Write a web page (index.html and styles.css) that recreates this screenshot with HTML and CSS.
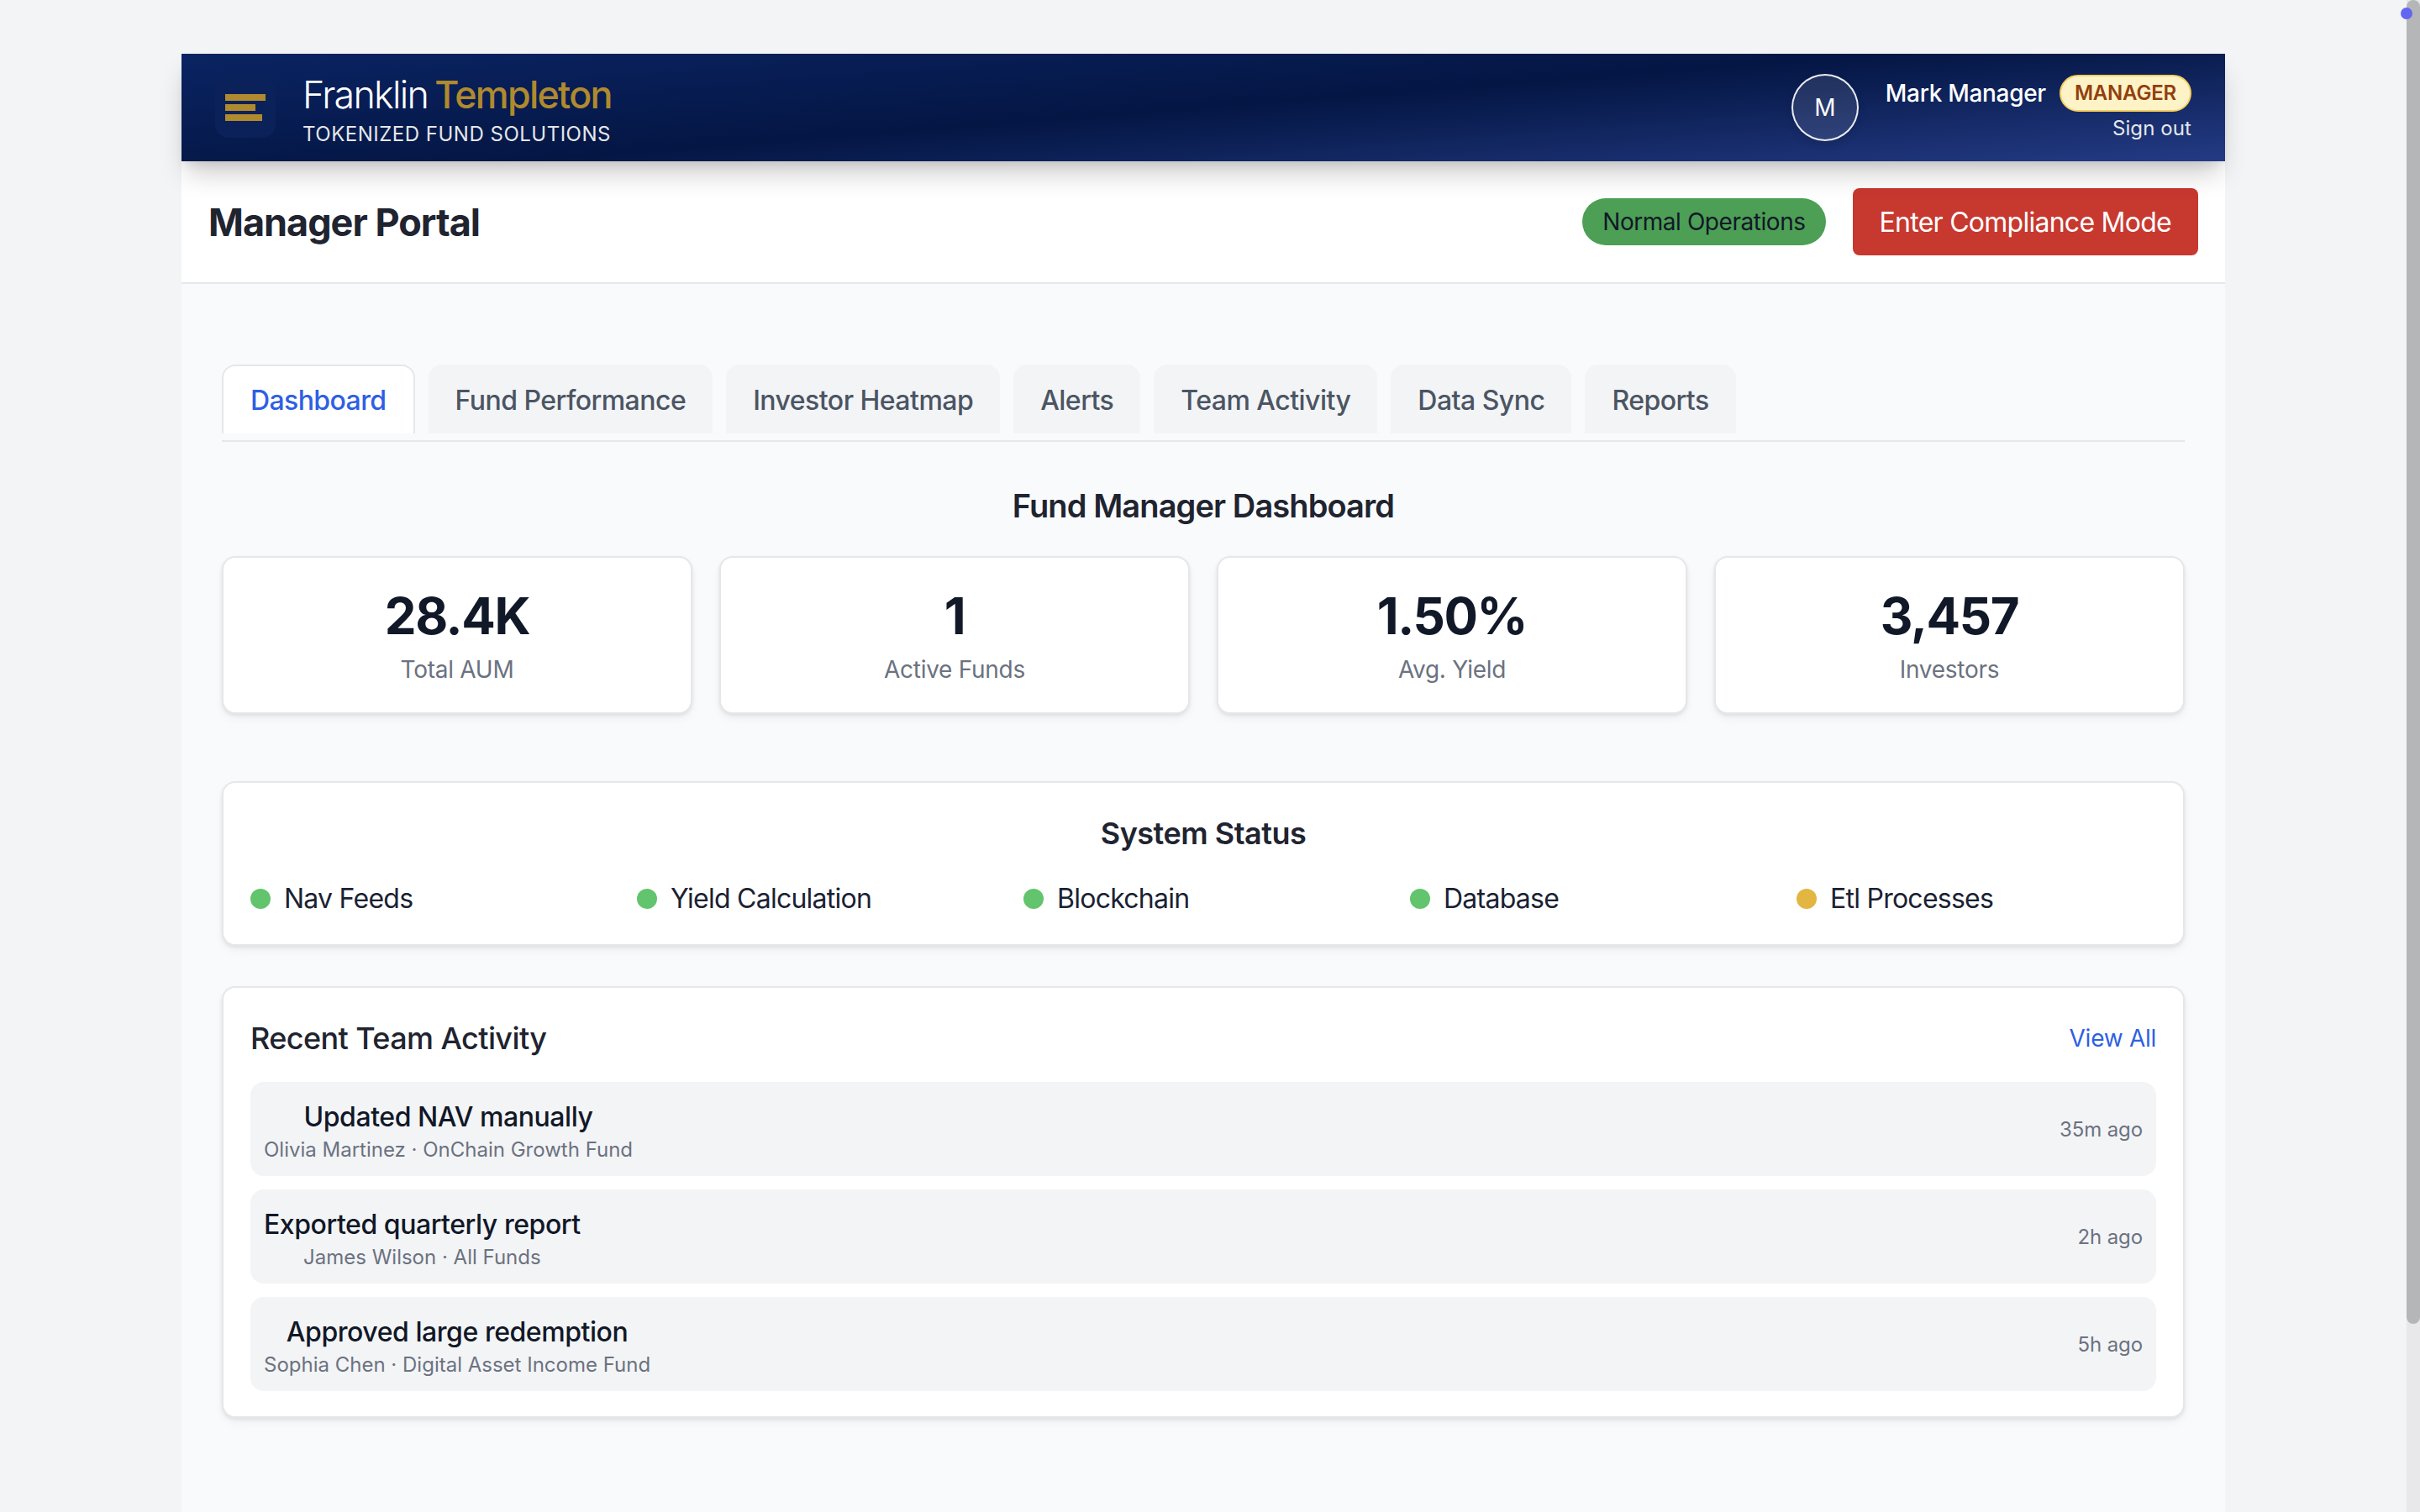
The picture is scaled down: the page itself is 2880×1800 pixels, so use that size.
FILE: index.html
```html
<!DOCTYPE html>
<html lang="en">
<head>
    <meta charset="UTF-8">
    <meta name="viewport" content="width=device-width, initial-scale=1.0">
    <title>Manager Portal</title>
    <link rel="stylesheet" href="styles.css">
</head>
<body>
    <div class="app">
        <header class="topbar">
            <div class="brand">
                <div class="brand-logo">
                    <svg width="48" height="32" viewBox="0 0 48 32">
                        <rect x="0" y="0" width="48" height="8" fill="#b08a2e"/>
                        <rect x="0" y="12" width="36" height="8" fill="#b08a2e"/>
                        <rect x="0" y="24" width="44" height="8" fill="#b08a2e"/>
                    </svg>
                </div>
                <div class="brand-text">
                    <div class="brand-name">Franklin <span class="brand-gold">Templeton</span></div>
                    <div class="brand-sub">TOKENIZED FUND SOLUTIONS</div>
                </div>
            </div>
            <div class="user">
                <div class="avatar">M</div>
                <div class="user-info">
                    <div class="user-line">
                        <span class="user-name">Mark Manager</span>
                        <span class="role-badge">MANAGER</span>
                    </div>
                    <a class="sign-out">Sign out</a>
                </div>
            </div>
        </header>

        <div class="portal-head">
            <h1>Manager Portal</h1>
            <div class="portal-actions">
                <span class="status-pill">Normal Operations</span>
                <button class="compliance-btn">Enter Compliance Mode</button>
            </div>
        </div>

        <main class="content">
            <nav class="tabs">
                <a class="tab active">Dashboard</a>
                <a class="tab">Fund Performance</a>
                <a class="tab">Investor Heatmap</a>
                <a class="tab">Alerts</a>
                <a class="tab">Team Activity</a>
                <a class="tab">Data Sync</a>
                <a class="tab">Reports</a>
            </nav>

            <h2 class="page-title">Fund Manager Dashboard</h2>

            <section class="stats">
                <div class="card stat"><div class="stat-value">28.4K</div><div class="stat-label">Total AUM</div></div>
                <div class="card stat"><div class="stat-value">1</div><div class="stat-label">Active Funds</div></div>
                <div class="card stat"><div class="stat-value">1.50%</div><div class="stat-label">Avg. Yield</div></div>
                <div class="card stat"><div class="stat-value">3,457</div><div class="stat-label">Investors</div></div>
            </section>

            <section class="card system">
                <h3>System Status</h3>
                <div class="system-list">
                    <div class="system-item"><span class="dot green"></span>Nav Feeds</div>
                    <div class="system-item"><span class="dot green"></span>Yield Calculation</div>
                    <div class="system-item"><span class="dot green"></span>Blockchain</div>
                    <div class="system-item"><span class="dot green"></span>Database</div>
                    <div class="system-item"><span class="dot yellow"></span>Etl Processes</div>
                </div>
            </section>

            <section class="card activity">
                <div class="activity-head">
                    <h3>Recent Team Activity</h3>
                    <a class="view-all">View All</a>
                </div>
                <div class="activity-row">
                    <div class="activity-text">
                        <div class="activity-title">Updated NAV manually</div>
                        <div class="activity-meta">Olivia Martinez · OnChain Growth Fund</div>
                    </div>
                    <span class="activity-time">35m ago</span>
                </div>
                <div class="activity-row">
                    <div class="activity-text">
                        <div class="activity-title">Exported quarterly report</div>
                        <div class="activity-meta">James Wilson · All Funds</div>
                    </div>
                    <span class="activity-time">2h ago</span>
                </div>
                <div class="activity-row">
                    <div class="activity-text">
                        <div class="activity-title">Approved large redemption</div>
                        <div class="activity-meta">Sophia Chen · Digital Asset Income Fund</div>
                    </div>
                    <span class="activity-time">5h ago</span>
                </div>
            </section>
        </main>
    </div>

    <div class="scrollbar"><div class="scrollbar-thumb"></div></div>
    <div class="corner-dot"></div>
</body>
</html>
```

FILE: styles.css
```css
html, body { height: 100%; overflow: hidden; }
body { margin: 0; padding-right: 16px; background: #f3f4f6; font-family: "Inter", "Liberation Sans", sans-serif; color: #111827; letter-spacing: -.017em; }
h1, h2, h3 { margin: 0; }

.app { width: 2432px; height: 1736px; margin: 64px auto 0; background: #f9fafb; }

/* top bar */
.topbar { position: relative; z-index: 1; display: flex; justify-content: space-between; align-items: center; height: 128px; padding: 0 40px; box-sizing: border-box; background: linear-gradient(175.5deg, #0a2463 0%, #041644 50%, #243b85 100%); box-shadow: 0 20px 30px -6px rgba(0,0,0,.2), 0 8px 12px -4px rgba(0,0,0,.08); }
.brand { display: flex; align-items: center; gap: 32px; }
.brand-logo { display: flex; align-items: center; justify-content: center; width: 72px; height: 72px; border-radius: 16px; background: #0a2159; }
.brand-text { padding-top: 5px; }
.brand-name { font-size: 44.8px; font-weight: 300; line-height: 54px; letter-spacing: -1.7px; word-spacing: -3px; color: #fff; }
.brand-gold { font-weight: 500; color: #b08a2e; }
.brand-sub { font-size: 24px; line-height: 30px; letter-spacing: .5px; color: #e5e7eb; margin-top: 5px; }

.user { display: flex; align-items: center; gap: 32px; }
.avatar { display: flex; align-items: center; justify-content: center; width: 80px; height: 80px; box-sizing: border-box; border: 2px solid rgba(255,255,255,.9); border-radius: 50%; background: rgba(255,255,255,.1); color: #fff; font-size: 28px; font-weight: 400; box-shadow: 0 4px 10px rgba(0,0,0,.12); }
.user-info { display: flex; flex-direction: column; align-items: flex-end; padding-top: 4px; }
.user-line { display: flex; align-items: center; gap: 16px; }
.user-name { font-size: 28px; font-weight: 500; letter-spacing: -.3px; color: #fff; }
.role-badge { height: 44px; padding: 0 16px; box-sizing: border-box; border: 2px solid #f6cf5f; border-radius: 22px; background: #fef3c7; color: #92400e; font-size: 24px; font-weight: 600; line-height: 40px; letter-spacing: -.2px; }
.sign-out { margin-top: 2px; font-size: 24px; line-height: 36px; letter-spacing: .1px; color: #e5e7eb; }

/* portal header */
.portal-head { display: flex; justify-content: space-between; align-items: center; height: 146px; padding: 0 32px; box-sizing: border-box; background: #fff; border-bottom: 2px solid #e5e7eb; }
.portal-head h1 { font-size: 45px; font-weight: 700; letter-spacing: -1px; color: #1f2430; }
.portal-actions { display: flex; align-items: center; gap: 32px; }
.status-pill { height: 56px; padding: 0 24px; border-radius: 28px; background: #4c9f55; color: #111827; font-size: 28px; line-height: 56px; letter-spacing: -.016em; }
.compliance-btn { height: 80px; padding: 0 32px; border: 0; border-radius: 8px; background: #c7382f; color: #fff; font-family: inherit; font-size: 32px; letter-spacing: -.023em; }

/* content */
.content { padding: 96px 48px 0; }
.tabs { display: flex; gap: 16px; padding-bottom: 8px; border-bottom: 2px solid #e5e7eb; }
.tab { height: 82px; padding: 0 32px; box-sizing: border-box; border-radius: 16px 16px 0 0; background: #f3f4f6; color: #4b5563; font-size: 32px; font-weight: 500; line-height: 86px; letter-spacing: -.53px; }
.tab.active { border: 2px solid #e5e7eb; border-bottom: 0; background: #fff; color: #2f5fe3; line-height: 82px; letter-spacing: -.6px; }

.page-title { margin: 51px 0 35px; text-align: center; font-size: 38px; font-weight: 600; line-height: 50px; letter-spacing: -.9px; color: #1f2430; }

.card { box-sizing: border-box; background: #fff; border: 2px solid #e5e7eb; border-radius: 16px; box-shadow: 0 2px 4px rgba(0,0,0,.08), 0 6px 12px rgba(0,0,0,.04); }
.stats { display: grid; grid-template-columns: repeat(4, 1fr); gap: 32px; }
.stat { height: 188px; padding-top: 33px; text-align: center; }
.stat-value { font-size: 60px; font-weight: 700; line-height: 72px; letter-spacing: -1.4px; color: #111827; }
.stat-label { margin-top: 8px; font-size: 28px; line-height: 40px; color: #6b7280; }

.system { height: 196px; margin-top: 80px; padding: 35px 32px 0; }
.system h3 { text-align: center; font-size: 36px; font-weight: 600; line-height: 50px; letter-spacing: -.014em; color: #1f2430; }
.system-list { display: grid; grid-template-columns: repeat(5, 1fr); gap: 32px; margin-top: 33px; }
.system-item { display: flex; align-items: center; gap: 16px; font-size: 32px; line-height: 40px; letter-spacing: -.75px; color: #1a2233; }
.dot { width: 24px; height: 24px; border-radius: 50%; }
.dot.green { background: #62c46c; }
.dot.yellow { background: #e3b541; }

.activity { height: 514px; margin-top: 48px; padding: 32px; }
.activity-head { display: flex; justify-content: space-between; align-items: center; height: 56px; margin-bottom: 24px; }
.activity-head h3 { font-size: 36px; font-weight: 500; letter-spacing: -.6px; color: #1f2430; }
.view-all { font-size: 28px; color: #2f5fe3; }
.activity-row { display: flex; justify-content: space-between; align-items: center; height: 112px; margin-top: 16px; padding: 0 16px; box-sizing: border-box; border-radius: 16px; background: #f3f4f6; }
.activity-text { padding-top: 5px; text-align: center; }
.activity-title { font-size: 32px; font-weight: 500; line-height: 44px; letter-spacing: -.45px; color: #111827; }
.activity-meta { margin-top: 1px; font-size: 24px; line-height: 32px; letter-spacing: 0; color: #6b7280; }
.activity-time { font-size: 24px; letter-spacing: -.1px; color: #6b7280; }

/* window scrollbar drawn on top of the page */
.scrollbar { position: fixed; top: 0; right: 0; width: 16px; height: 100%; background: #e8e8ea; }
.scrollbar-thumb { height: 1576px; border-radius: 8px; background: #b5b6b8; }
.corner-dot { position: fixed; top: 9px; right: 9px; width: 14px; height: 14px; border-radius: 50%; background: #6366f1; }
```
